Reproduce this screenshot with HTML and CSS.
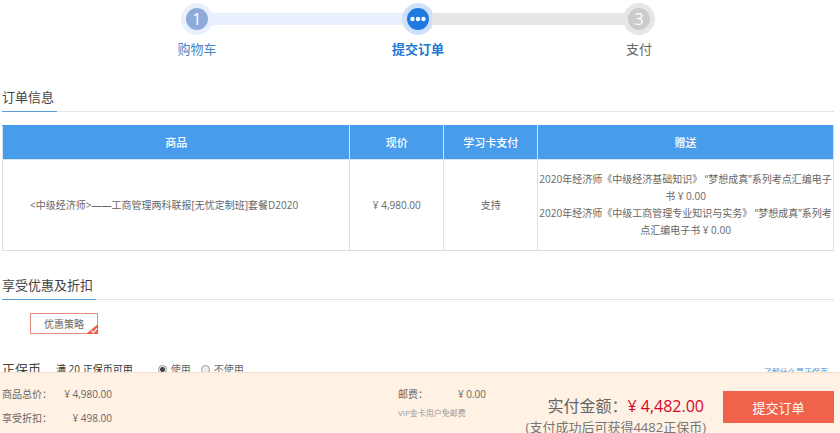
FILE: index.html
```html
<!DOCTYPE html>
<html lang="zh-CN">
<head>
    <meta charset="UTF-8">
    <meta name="viewport" content="width=device-width, initial-scale=1.0">
    <title>提交订单</title>
    <link rel="stylesheet" href="styles.css">
</head>
<body>
    <main class="page">
        <ol class="steps">
            <li class="step done">
                <span class="circle">1</span>
                <span class="step-name">购物车</span>
            </li>
            <li class="line line-done"></li>
            <li class="step current">
                <span class="circle">
                    <svg width="16" height="6" viewBox="0 0 16 6" fill="#fff">
                        <circle cx="2.5" cy="3" r="2.2"/>
                        <circle cx="8" cy="3" r="2.2"/>
                        <circle cx="13.5" cy="3" r="2.2"/>
                    </svg>
                </span>
                <span class="step-name">提交订单</span>
            </li>
            <li class="line"></li>
            <li class="step">
                <span class="circle">3</span>
                <span class="step-name">支付</span>
            </li>
        </ol>

        <section>
            <h2 class="title"><span>订单信息</span></h2>
            <table class="goods">
                <colgroup>
                    <col class="col-name">
                    <col class="col-small">
                    <col class="col-small">
                    <col>
                </colgroup>
                <thead>
                    <tr>
                        <th>商品</th>
                        <th>现价</th>
                        <th>学习卡支付</th>
                        <th>赠送</th>
                    </tr>
                </thead>
                <tbody>
                    <tr>
                        <td class="goods-name">&lt;中级经济师&gt;——工商管理两科联报[无忧定制班]套餐D2020</td>
                        <td>¥ 4,980.00</td>
                        <td>支持</td>
                        <td>
                            <p>2020年经济师《中级经济基础知识》 “梦想成真”系列考点汇编电子书 ¥ 0.00</p>
                            <p>2020年经济师《中级工商管理专业知识与实务》 “梦想成真”系列考点汇编电子书 ¥ 0.00</p>
                        </td>
                    </tr>
                </tbody>
            </table>
        </section>

        <section class="discount">
            <h2 class="title"><span>享受优惠及折扣</span></h2>
            <button type="button" class="tag">
                优惠策略
                <svg class="tag-check" width="12" height="10" viewBox="0 0 12 10">
                    <path d="M12 0V10H0Z" fill="#ee5f47"/>
                    <path d="M5.5 6.8L7.5 8.6L11 4.4" fill="none" stroke="#fff" stroke-width="1.2"/>
                </svg>
            </button>
            <div class="coin">
                <h3>正保币</h3>
                <span class="coin-rule">满 20 正保币可用</span>
                <label><input type="radio" name="coin" checked>使用</label>
                <label><input type="radio" name="coin">不使用</label>
                <a href="#">了解什么是正保币</a>
            </div>
        </section>
    </main>

    <footer class="pay-bar">
        <dl class="sums">
            <div><dt>商品总价：</dt><dd>¥ 4,980.00</dd></div>
            <div><dt>享受折扣：</dt><dd>¥ 498.00</dd></div>
        </dl>
        <div class="post">
            <p class="post-fee"><span>邮费：</span><span>¥ 0.00</span></p>
            <p class="post-tip">VIP金卡用户免邮费</p>
        </div>
        <div class="total">
            <p class="total-sum">实付金额：<strong>¥ 4,482.00</strong></p>
            <p class="total-tip">(支付成功后可获得4482正保币)</p>
        </div>
        <button type="submit" class="submit">提交订单</button>
    </footer>
</body>
</html>
```

FILE: styles.css
```css
* {
    box-sizing: border-box;
}
body, h2, h3, p, ol, dl, dd {
    margin: 0;
    padding: 0;
}
body {
    font-family: "Open Sans", "Noto Sans CJK SC", sans-serif;
    font-size: 10px;
    line-height: 17px;
    color: #666;
    background: #fff;
}
button, input {
    font-family: inherit;
    margin: 0;
}
.page {
    padding: 3px 6px 50px 2px;
}

/* steps */
.steps {
    display: flex;
    width: 57%;
    margin: 0 auto 28px;
    list-style: none;
}
.step {
    display: flex;
    flex-direction: column;
    align-items: center;
    width: 32px;
    color: #666;
}
.circle {
    display: flex;
    align-items: center;
    justify-content: center;
    width: 32px;
    height: 32px;
    border: 5px solid #e7e7e7;
    border-radius: 50%;
    background: #cbcbcb;
    color: #fff;
    font-size: 16px;
}
.step-name {
    margin-top: 4px;
    font-size: 13px;
    line-height: 20px;
    white-space: nowrap;
}
.done {
    color: #4a86c8;
}
.done .circle {
    border-color: #e8f0fe;
    background: #8eaadb;
}
.current {
    color: #2277d4;
    font-weight: bold;
}
.current .circle {
    border-color: #cfe0fa;
    background: #1f7ae0;
}
.line {
    flex: 1;
    height: 12px;
    margin: 10px -2px 0;
    background: #e7e7e7;
}
.line-done {
    background: #e8f0fe;
}

/* section titles */
.title {
    border-bottom: 1px solid #e0e4e8;
    font-size: 13px;
    font-weight: normal;
    line-height: 20px;
    color: #444;
}
.title span {
    display: inline-block;
    margin-bottom: -1px;
    padding: 0 3px 4px 0;
    border-bottom: 1px solid #5b9fd8;
    vertical-align: top;
}

/* order table */
.goods {
    width: 100%;
    margin-top: 13px;
    border-collapse: collapse;
    table-layout: fixed;
    text-align: center;
}
.col-name {
    width: 41.8%;
}
.col-small {
    width: 11.3%;
}
.goods th {
    height: 34px;
    padding: 0;
    border: 1px solid #d9e4ef;
    border-top-color: #489cec;
    background: #489cec;
    color: #fff;
    font-size: 11px;
    font-weight: 500;
}
.goods td {
    height: 91px;
    padding: 0;
    border: 1px solid #dcdfe6;
}
.goods .goods-name {
    padding-right: 24px;
}

/* discounts */
.discount {
    margin-top: 24px;
}
.tag {
    position: relative;
    display: block;
    width: 68px;
    height: 21px;
    margin: 13px 0 0 28px;
    padding: 0;
    border: 1px solid #e58b7d;
    background: #fff;
    color: #666;
    font-size: 10px;
    cursor: pointer;
}
.tag-check {
    position: absolute;
    right: -1px;
    bottom: -1px;
}
.coin {
    display: flex;
    align-items: center;
    margin-top: 22px;
    line-height: 20px;
}
.coin h3 {
    font-size: 13px;
    font-weight: normal;
    color: #444;
}
.coin-rule {
    margin: 0 25px 0 15px;
    color: #333;
}
.coin label {
    display: flex;
    align-items: center;
    gap: 4px;
    margin-right: 10px;
}
.coin input {
    appearance: none;
    width: 9px;
    height: 9px;
    border: 1px solid #999;
    border-radius: 50%;
    background: #eee;
}
.coin input:checked {
    background: radial-gradient(circle, #444 2px, #eee 3px);
}
.coin a {
    margin-left: auto;
    padding: 6px 6px 0 0;
    color: #4a90d0;
    font-size: 8px;
    text-decoration: none;
}

/* bottom bar, always over the page */
.pay-bar {
    position: fixed;
    left: 0;
    right: 0;
    bottom: 0;
    display: flex;
    align-items: flex-start;
    height: 61px;
    padding: 0 6px 0 2px;
    border-top: 1px solid #f5e0cb;
    background: #fff1e3;
    overflow: hidden;
}
.sums {
    width: 47.6%;
    padding-top: 9px;
    line-height: 24px;
}
.sums div {
    display: flex;
    justify-content: space-between;
    width: 110px;
}
.post {
    flex: 1;
    padding-top: 13px;
}
.post-fee {
    display: flex;
    justify-content: space-between;
    width: 88px;
}
.post-tip {
    margin-top: 1px;
    color: #999;
    font-size: 8px;
}
.total {
    margin-right: 17px;
    padding-top: 21px;
    text-align: right;
}
.total-sum {
    padding-right: 2px;
    font-size: 16px;
    line-height: 24px;
}
.total-sum strong {
    color: #d9042b;
    font-weight: normal;
}
.total-tip {
    color: #777;
    font-size: 13px;
    line-height: 18px;
}
.submit {
    width: 111px;
    height: 32px;
    margin-top: 18px;
    border: 0;
    background: #ef624b;
    color: #fff;
    font-size: 13px;
    cursor: pointer;
}
```
